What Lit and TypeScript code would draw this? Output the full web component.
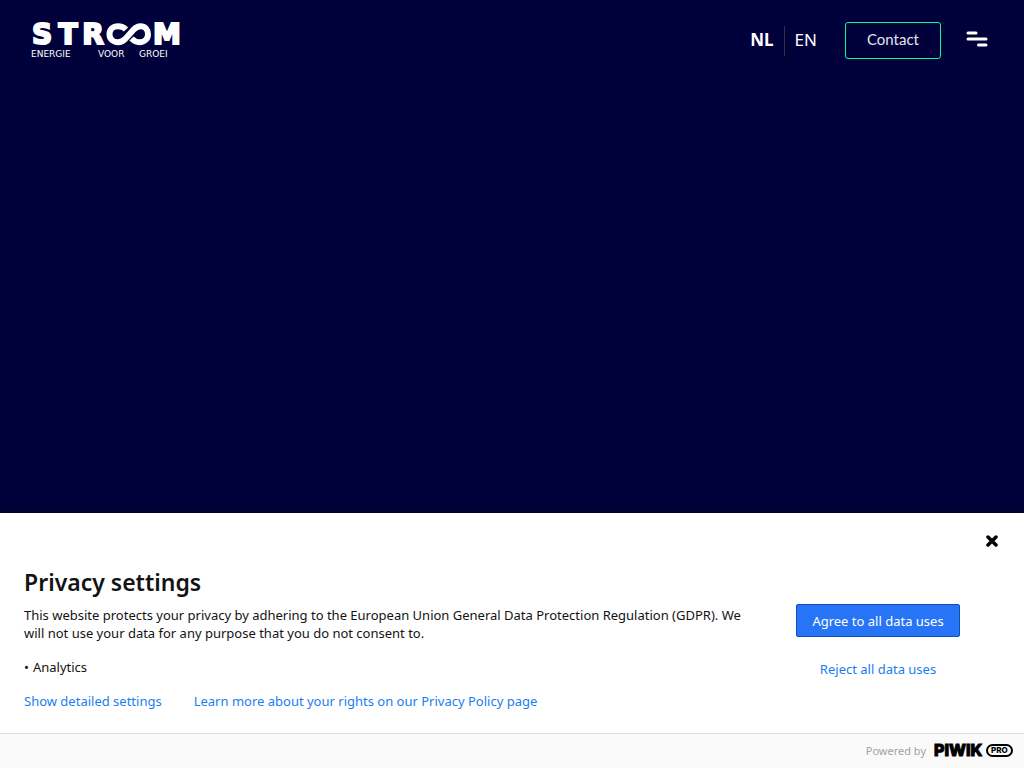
import { LitElement, html, css, svg } from "lit";
import { customElement } from "lit/decorators.js";

@customElement("stroom-logo")
class StroomLogo extends LitElement {
  static styles = css`
    :host { display: block; color: #fff; }
    .logo { display: block; width: 156px; height: 48px; fill: currentColor; overflow: visible; }
    .word { font: 700 28px "DejaVu Sans", sans-serif; stroke: currentColor; stroke-width: 2; text-anchor: middle; }
    .tag { font: 400 9px "DejaVu Sans", sans-serif; }
    .loop { fill: none; stroke: currentColor; stroke-width: 6; }
  `;
  render() {
    return html`<svg class="logo" viewBox="0 0 156 48" role="img" aria-label="Stroom, energie voor groei">
      ${svg`
        <text class="word" x="12" y="30">S</text>
        <text class="word" x="38" y="30">T</text>
        <text class="word" x="63" y="30">R</text>
        <path class="loop" d="M96 15.500C94 13.500 91.500 12.200 88 12.200C83 12.200 79.500 15.600 79.500 20.200C79.500 24.800 83 28.200 88 28.200C91 28.200 93 27.200 95 25.200L103.500 15.800C105.500 13.500 107.500 12.200 110.500 12.200C115 12.200 118 15.600 118 20.200C118 24.800 114.500 28.200 109.500 28.200C106.500 28.200 104 27 101.500 24.500"></path>
        <text class="word" x="137" y="30">M</text>
        <text class="tag" x="1" y="43">ENERGIE</text>
        <text class="tag" x="68" y="43">VOOR</text>
        <text class="tag" x="109" y="43">GROEI</text>
      `}
    </svg>`;
  }
}

@customElement("site-header")
class SiteHeader extends LitElement {
  static styles = css`
    :host { display: block; }
    .bar { display: flex; align-items: flex-start; justify-content: space-between; padding: 14px 36px 0 30px; }
    .home { display: block; }
    .right { display: flex; align-items: center; padding-top: 8px; }
    .lang { display: flex; align-items: center; margin-right: 28px; font: 400 17px/28px "Noto Sans", sans-serif; }
    .lang a { height: 30px; color: #fff; text-decoration: none; padding: 0 10px; }
    .lang a + a { border-left: 1px solid #33333f; padding-right: 0; }
    .lang .current { font-weight: 700; }
    .contact { box-sizing: border-box; height: 37px; padding: 0 21px; border: 1px solid #00ff8c; border-radius: 3px; color: #e4e4ee; font: 400 15px/32px Lato, sans-serif; text-decoration: none; }
    .menu { border: 0; padding: 0 0 4px; margin-left: 25px; background: none; cursor: pointer; }
    .menu svg { display: block; width: 22px; height: 16px; fill: none; stroke: #fff; stroke-width: 3; stroke-linecap: round; }
  `;
  render() {
    return html`<header class="bar">
      <a class="home" href="#"><stroom-logo></stroom-logo></a>
      <div class="right">
        <nav class="lang"><a class="current" href="#nl">NL</a><a href="#en">EN</a></nav>
        <a class="contact" href="#contact">Contact</a>
        <button class="menu" aria-label="Menu">
          <svg viewBox="0 0 22 16"><path d="M2 2h8M2 8h18M12.500 14h7.500"></path></svg>
        </button>
      </div>
    </header>`;
  }
}

@customElement("privacy-panel")
class PrivacyPanel extends LitElement {
  static styles = css`
    :host { display: block; background: #fff; color: #131313; font: 400 13px/18px "Noto Sans", sans-serif; box-shadow: 0 0 8px rgba(0, 0, 0, 0.4); }
    .top { display: flex; justify-content: flex-end; padding: 20px 24px 17px; }
    .close { display: block; border: 0; padding: 2px; background: none; cursor: pointer; }
    .close svg { display: block; width: 12px; height: 12px; stroke: #000; stroke-width: 3.500; stroke-linecap: round; }
    .body { display: flex; padding: 0 24px 23px; }
    .info { flex: 1; }
    h2 { margin: 0 0 8px; font-size: 23px; line-height: 32px; font-weight: 600; }
    p { margin: 0; }
    ul { margin: 16px 0; padding: 0; list-style: none; }
    li::before { content: "•"; margin-right: 4px; }
    a, .reject { color: #1a7ef0; text-decoration: none; }
    .links { display: flex; gap: 32px; }
    .actions { display: flex; flex-direction: column; align-items: center; width: 164px; margin: 38px 40px 0 32px; }
    button { font: inherit; cursor: pointer; }
    .agree { box-sizing: border-box; width: 100%; height: 33px; padding: 0; border: 1px solid #0f4fb8; border-radius: 2px; background: #2775f6; color: #fff; }
    .reject { height: 32px; margin-top: 16px; padding: 0; border: 0; background: none; }
    .foot { display: flex; align-items: center; justify-content: flex-end; gap: 8px; height: 34px; padding-right: 10px; border-top: 1px solid #dcdcdc; background: #fafafa; color: #a3a3a3; font-size: 11px; }
    .piwik { display: block; width: 80px; height: 24px; overflow: visible; }
    .name { font: 800 16px Inter, sans-serif; stroke: #000; stroke-width: 1; }
    .pro { font: 800 8px Inter, sans-serif; }
    .pill { fill: none; stroke: #000; stroke-width: 2; }
  `;
  render() {
    return html`<section aria-labelledby="title">
      <div class="top">
        <button class="close" aria-label="Close"><svg viewBox="0 0 12 12"><path d="M2 2l8 8M10 2l-8 8"></path></svg></button>
      </div>
      <div class="body">
        <div class="info">
          <h2 id="title">Privacy settings</h2>
          <p>This website protects your privacy by adhering to the European Union General Data Protection Regulation (GDPR). We will not use your data for any purpose that you do not consent to.</p>
          <ul><li>Analytics</li></ul>
          <div class="links">
            <a href="#settings">Show detailed settings</a>
            <a href="#policy">Learn more about your rights on our Privacy Policy page</a>
          </div>
        </div>
        <div class="actions">
          <button class="agree">Agree to all data uses</button>
          <button class="reject">Reject all data uses</button>
        </div>
      </div>
      <footer class="foot">
        <span>Powered by</span>
        <svg class="piwik" viewBox="0 0 80 24" role="img" aria-label="Piwik Pro">
          <text class="name" x="0" y="17">PIWIK</text>
          <rect class="pill" x="53" y="6" width="25" height="11" rx="5.500"></rect>
          <text class="pro" x="57" y="14">PRO</text>
        </svg>
      </footer>
    </section>`;
  }
}

@customElement("app-root")
class AppRoot extends LitElement {
  static styles = css`
    :host { display: flex; flex-direction: column; min-height: 100vh; background: #00003b; }
    site-header { flex: 1; }
  `;
  render() {
    return html`<site-header></site-header><privacy-panel></privacy-panel>`;
  }
}
